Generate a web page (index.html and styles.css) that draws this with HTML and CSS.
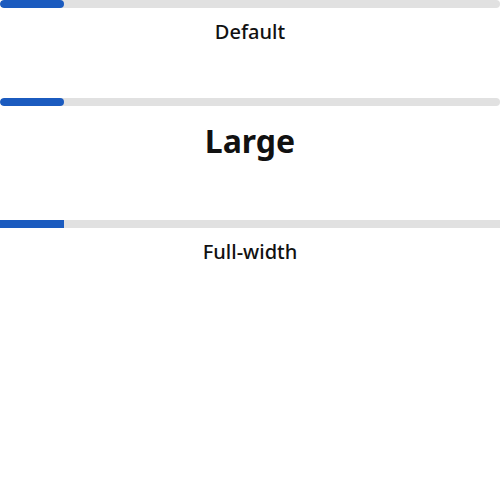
FILE: index.html
```html
<!DOCTYPE html>
<html>
<head>
<meta charset="utf-8">
<link rel="stylesheet" href="styles.css">
</head>
<body>
  <section class="demo demo-default">
    <div class="track"><div class="fill" style="width:64px"></div></div>
    <div class="label">Default</div>
  </section>
  <section class="demo demo-large">
    <div class="track"><div class="fill" style="width:64px"></div></div>
    <div class="label">Large</div>
  </section>
  <section class="demo demo-full">
    <div class="track square"><div class="fill" style="width:64px"></div></div>
    <div class="label">Full-width</div>
  </section>
</body>
</html>
```
FILE: styles.css
```css
html, body {
  margin: 0;
  padding: 0;
  background: #ffffff;
  font-family: "Noto Sans", "Open Sans", sans-serif;
  color: #111111;
}
.demo {
  display: flex;
  flex-direction: column;
}
.track {
  height: 8px;
  background: #e1e1e1;
  border-radius: 4px;
  overflow: hidden;
}
.track.square {
  border-radius: 0;
}
.fill {
  height: 100%;
  background: #1b5bbf;
  border-radius: 4px;
}
.track.square .fill {
  border-radius: 0;
}
.label {
  text-align: center;
}
.demo-default {
  height: 98px;
}
.demo-default .label,
.demo-full .label {
  margin-top: 10px;
  font-size: 20px;
  font-weight: 500;
  line-height: 28px;
}
.demo-large {
  height: 122px;
}
.demo-large .label {
  margin-top: 13px;
  font-size: 32px;
  font-weight: 700;
  line-height: 44px;
}
```
